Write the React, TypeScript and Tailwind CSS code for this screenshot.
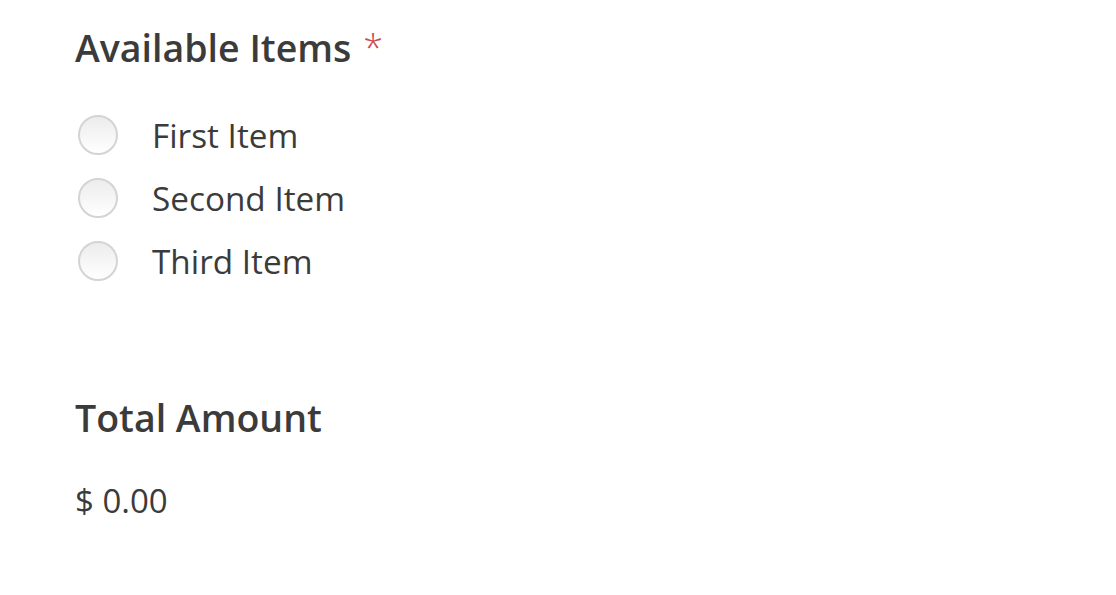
import React from "react";

const items = ["First Item", "Second Item", "Third Item"];

function Radio() {
  return (
    <span className="inline-block w-[40px] h-[40px] rounded-full border-2 border-[#d4d4d4] bg-gradient-to-b from-[#ececec] to-[#ffffff] shrink-0" />
  );
}

export default function App() {
  return (
    <div
      className="w-[1116px] h-[595px] bg-white text-[#3b3b3b] pl-[75px] pt-[24px]"
      style={{ fontFamily: '"Open Sans", "Noto Sans", Arial, sans-serif' }}
    >
      <div className="flex items-start text-[37.5px] font-semibold leading-[48px]">
        <span>Available Items</span>
        <span className="ml-[12px] text-[#cc4a4f] font-light text-[36px] leading-[48px]">*</span>
      </div>
      <div className="mt-[43px] flex flex-col gap-[23px]">
        {items.map((t) => (
          <label key={t} className="flex items-center gap-[34px] pl-[3px]">
            <Radio />
            <span className="text-[33.3px] leading-[40px]">{t}</span>
          </label>
        ))}
      </div>
      <div className="mt-[113px] text-[37.5px] font-semibold leading-[48px]">Total Amount</div>
      <div className="mt-[39px] text-[33px] leading-[40px]">$ 0.00</div>
    </div>
  );
}
